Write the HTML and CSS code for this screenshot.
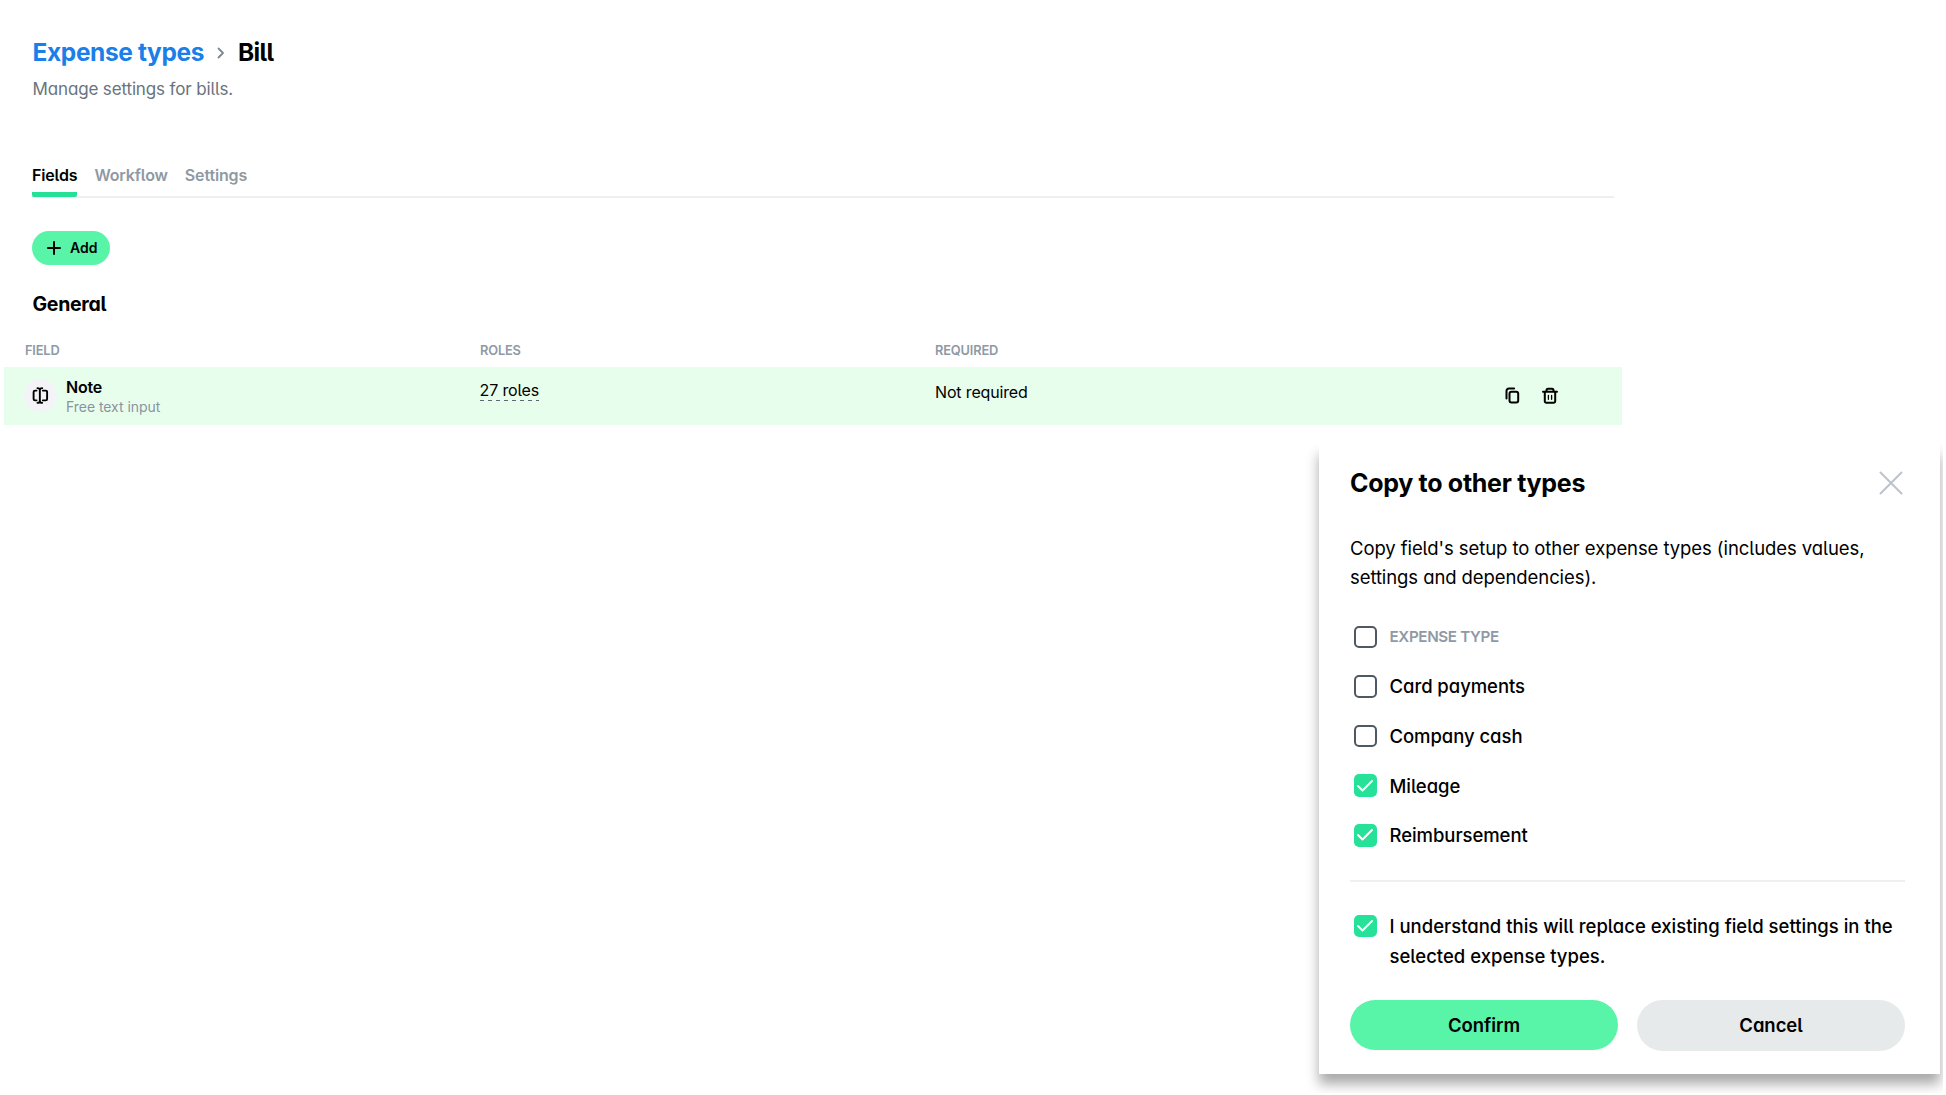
FILE: index.html
```html
<!DOCTYPE html>
<html lang="en">
<head>
<meta charset="utf-8">
<title>Expense types – Bill</title>
<link rel="stylesheet" href="styles.css">
</head>
<body>
<main class="page">
  <header class="page-header">
    <h1 class="breadcrumb">
      <a class="crumb-link">Expense types</a>
      <svg class="chevron" width="8" height="12" viewBox="0 0 8 12"><path d="M1.500 1.500 6 6l-4.500 4.500"/></svg>
      <span class="crumb-current">Bill</span>
    </h1>
    <p class="subtitle">Manage settings for bills.</p>
  </header>
  <nav class="tabs">
    <a class="tab tab-active">Fields</a>
    <a class="tab">Workflow</a>
    <a class="tab">Settings</a>
  </nav>
  <button class="add-button">
    <svg width="14" height="14" viewBox="0 0 14 14"><path d="M7 1v12M1 7h12"/></svg>
    <span>Add</span>
  </button>
  <h2 class="section-title">General</h2>
  <div class="table-head">
    <span>FIELD</span><span>ROLES</span><span>REQUIRED</span>
  </div>
  <div class="table-row">
    <div class="field-cell">
      <span class="field-icon">
        <svg width="17" height="17" viewBox="0 0 18 18"><path d="M4.800 3.800H3.200a1.500 1.500 0 0 0-1.500 1.500v7.400a1.500 1.500 0 0 0 1.500 1.500h1.600M11.500 3.800H14.500a1.500 1.500 0 0 1 1.500 1.500v7.400a1.500 1.500 0 0 1-1.500 1.500h-3M5.800 1.200Q8.300 1.200 8.300 3.200Q8.300 1.200 10.800 1.200M8.300 3v12M5.800 16.800Q8.300 16.800 8.300 14.800Q8.300 16.800 10.800 16.800"/></svg>
      </span>
      <div class="field-text">
        <div class="field-name">Note</div>
        <div class="field-kind">Free text input</div>
      </div>
    </div>
    <div class="roles-cell"><span class="roles-link">27 roles</span></div>
    <div class="required-cell">Not required</div>
    <div class="row-actions">
      <svg width="15" height="18" viewBox="0 0 15 18"><path d="M1.500 11.500V4a2.400 2.400 0 0 1 2.400-2.400h5.200"/><rect x="4.500" y="4.800" width="8.700" height="10.600" rx="2"/></svg>
      <svg width="16" height="18" viewBox="0 0 16 18"><path d="M1 4.800h14M4.500 4.500V3.300a1.500 1.500 0 0 1 1.500-1.500h4a1.500 1.500 0 0 1 1.500 1.500v1.200M2.800 5v9.300a1.500 1.500 0 0 0 1.500 1.500h7.400a1.500 1.500 0 0 0 1.500-1.500V5"/><path class="thin" d="M6.400 8.300v4M9.600 8.300v4"/></svg>
    </div>
  </div>
</main>

<section class="dialog">
  <header class="dialog-header">
    <h2 class="dialog-title">Copy to other types</h2>
    <svg class="close" width="24" height="24" viewBox="0 0 24 24"><path d="M1.500 1.500l21 21M22.500 1.500l-21 21"/></svg>
  </header>
  <p class="dialog-text">Copy field's setup to other expense types (includes values,<br>settings and dependencies).</p>
  <div class="options">
    <div class="option"><span class="box"></span><span class="option-head">EXPENSE TYPE</span></div>
    <div class="option"><span class="box"></span><span>Card payments</span></div>
    <div class="option"><span class="box"></span><span>Company cash</span></div>
    <div class="option"><span class="box box-on"><svg width="18" height="14" viewBox="0 0 18 14"><path d="M2 7 6.500 11.500 16 2"/></svg></span><span>Mileage</span></div>
    <div class="option"><span class="box box-on"><svg width="18" height="14" viewBox="0 0 18 14"><path d="M2 7 6.500 11.500 16 2"/></svg></span><span>Reimbursement</span></div>
  </div>
  <div class="consent"><span class="box box-on"><svg width="18" height="14" viewBox="0 0 18 14"><path d="M2 7 6.500 11.500 16 2"/></svg></span><p class="consent-text">I understand this will replace existing field settings in the<br>selected expense types.</p></div>
  <footer class="dialog-actions">
    <button class="action confirm">Confirm</button>
    <button class="action cancel">Cancel</button>
  </footer>
</section>
</body>
</html>
```
FILE: styles.css
```css
* { box-sizing: border-box; }
body {
  margin: 0;
  height: 1095px;
  overflow: hidden;
  background: #fff;
  color: #000;
  font-family: Inter, "Liberation Sans", sans-serif;
  font-feature-settings: "cv05" 1, "cv11" 1;
}
h1, h2, p { margin: 0; }
button { border: 0; color: inherit; font: inherit; font-feature-settings: inherit; letter-spacing: inherit; }
svg { display: block; fill: none; stroke: currentColor; stroke-width: 2; stroke-linecap: round; stroke-linejoin: round; }

.page { width: 1622px; padding: 32px 0 0 4px; }
.page-header { padding-left: 28.500px; }
.breadcrumb { display: flex; align-items: center; font-size: 24.500px; line-height: 41px; font-weight: 700; letter-spacing: -.38px; }
.crumb-current { letter-spacing: -.7px; }
.crumb-link { color: #1a7fe8; }
.chevron { margin: 1px 13px 0 13px; color: #7e8893; stroke-width: 1.800; }
.subtitle { margin-top: 2px; font-size: 17px; line-height: 29px; letter-spacing: -.14px; color: #69737e; }

.tabs { display: flex; gap: 17px; width: 1582px; height: 35px; margin: 59px 0 0 28px; border-bottom: 2px solid #eeeff1; letter-spacing: -.15px; }
.tab { height: 34px; font-size: 16px; line-height: 24px; font-weight: 600; color: #8f99a3; }
.tab-active { color: #000; background: linear-gradient(#25e097, #25e097) bottom / 100% 5px no-repeat; border-radius: 0 0 2px 2px; }

.add-button { display: flex; align-items: center; gap: 9px; width: 78px; height: 34px; margin: 33px 0 0 28px; padding: 0 0 1px 15px; border-radius: 17px; background: #58f4a8; font-size: 14px; font-weight: 600; }
.section-title { margin: 25px 0 0 28.500px; font-size: 19.500px; line-height: 28px; font-weight: 700; letter-spacing: -.3px; }

.table-head, .table-row { display: grid; grid-template-columns: 455px 455px 1fr 117px; padding-left: 21px; }
.table-head { margin-top: 23px; font-size: 12.800px; line-height: 20px; font-weight: 600; letter-spacing: -.15px; color: #8f99a5; }
.table-row { height: 58.500px; margin-top: 5.500px; background: #e8feed; font-size: 16px; line-height: 24px; }
.field-cell { display: flex; align-items: center; gap: 9px; margin-left: -1px; }
.field-icon { display: grid; place-items: center; width: 33px; height: 33px; border-radius: 50%; background: #f4f3f8; }
.field-text { padding-top: 1px; }
.field-name { line-height: 20px; font-weight: 600; letter-spacing: -.2px; }
.field-kind { font-size: 14px; line-height: 19px; letter-spacing: -.05px; color: #89949f; }
.roles-cell { padding-top: 11.500px; margin-left: -.5px; letter-spacing: -.12px; }
.roles-link {
  display: inline-block;
  line-height: 22px;
  background: repeating-linear-gradient(90deg, #5d6873 0 4px, transparent 4px 8px) bottom / 100% 1px no-repeat;
}
.required-cell { padding-top: 13.500px; letter-spacing: -.15px; }
.row-actions { display: flex; gap: 22px; padding-top: 20.500px; }
.thin { stroke-width: 1.300; }

.dialog {
  position: absolute; left: 1319px; top: 445px; width: 621px; height: 629px;
  padding: 18px 35px 0 31px;
  background: #fff;
  box-shadow: 0 10px 12px rgba(0,0,0,.34);
  clip-path: inset(0 -3px -19px -14px);
}
.dialog-header { display: flex; justify-content: space-between; align-items: center; padding-right: 2px; }
.dialog-title { font-size: 25px; line-height: 40px; font-weight: 700; letter-spacing: -.3px; }
.close { color: #bdc2cb; }
.dialog-text { margin-top: 30.500px; font-size: 18.500px; line-height: 29.700px; letter-spacing: -.085px; }
.options { height: 289px; padding-top: 19.200px; border-bottom: 2px solid #eeeff1; letter-spacing: -.06px; }
.option { display: flex; align-items: center; gap: 13px; height: 49.600px; font-size: 18.500px; font-weight: 500; padding-left: 4px; }
.option-head { font-size: 15.200px; font-weight: 600; letter-spacing: -.36px; color: #8f99a5; }
.box { display: grid; place-items: center; flex: none; width: 22.500px; height: 22.500px; border: 2px solid #4f5963; border-radius: 5px; }
.box-on { border: 0; background: #25e298; color: #fff; }
.consent { display: flex; gap: 13px; margin-top: 30px; padding-left: 4px; font-size: 18.500px; line-height: 29.700px; font-weight: 500; }
.consent .box { margin-top: 3px; }
.dialog-actions { display: flex; align-items: flex-start; gap: 19px; margin-top: 29px; letter-spacing: -.06px; }
.action { flex: 1; height: 50px; border-radius: 26px; font-size: 18.500px; font-weight: 600; }
.confirm { background: #58f4a8; }
.cancel { height: 51px; padding-bottom: 3px; background: #e7eaeb; }
```
